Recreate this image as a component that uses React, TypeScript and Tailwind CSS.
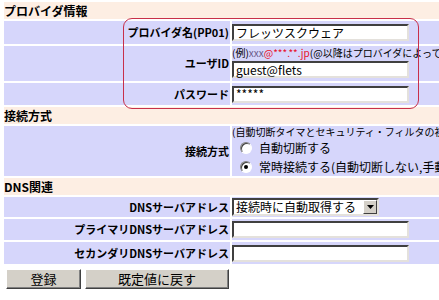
import React from "react";

const font = { fontFamily: '"Noto Sans CJK JP", "Noto Sans", sans-serif' };

const sunken =
  "border-2 border-t-[#404040] border-l-[#404040] border-b-[#e4e1dc] border-r-[#e4e1dc] bg-white";

function TextBox({ value = "", width = "w-[177px]" }: { value?: string; width?: string }) {
  return (
    <div className={`${sunken} ${width} h-[17px] flex items-center px-[2px] text-[12px] leading-none text-black`}>
      {value}
    </div>
  );
}

function Header({ title }: { title: string }) {
  return (
    <tr>
      <td colSpan={2} className="bg-[#fdeee3] h-[17px] p-0 text-[12px] font-bold leading-none text-black align-middle">
        {title}
      </td>
    </tr>
  );
}

function Label({ children }: { children: React.ReactNode }) {
  return (
    <td className="bg-[#d6d6fb] w-[226px] p-0 pr-[1px] text-right text-[11px] font-bold leading-none text-black align-middle whitespace-nowrap">
      {children}
    </td>
  );
}

function Radio({ checked }: { checked?: boolean }) {
  return (
    <span className="relative inline-flex w-[12px] h-[12px] rounded-full bg-white border border-t-[#808080] border-l-[#808080] border-b-[#ffffff] border-r-[#ffffff] shadow-[inset_1px_1px_0_#404040] items-center justify-center">
      {checked && <span className="w-[4px] h-[4px] rounded-full bg-black" />}
    </span>
  );
}

function Button({ label, width }: { label: string; width: string }) {
  return (
    <div
      className={`${width} h-[20px] bg-[#d4d0c8] border border-t-white border-l-white border-b-[#404040] border-r-[#404040] shadow-[inset_-1px_-1px_0_#808080] flex items-center justify-center text-[13px] text-black`}
    >
      {label}
    </div>
  );
}

export default function App() {
  return (
    <div className="relative w-[439px] h-[300px] overflow-hidden bg-white" style={font}>
      <table className="ml-[2px] border-separate border-spacing-[2px] w-[620px]">
        <tbody>
          <Header title="プロバイダ情報" />
          <tr className="h-[23px]">
            <Label>プロバイダ名(PP01)</Label>
            <td className="bg-[#d6d6fb] p-0 align-middle">
              <TextBox value="フレッツスクウェア" />
            </td>
          </tr>
          <tr className="h-[35px]">
            <Label>ユーザID</Label>
            <td className="bg-[#d6d6fb] p-0 align-top">
              <div className="h-[14px] flex items-center text-[10px] leading-none whitespace-nowrap text-black">
                (例)<span className="text-[#6a5a8a]">xxx</span>
                <span className="text-[#e8102a]">@***.**.jp</span>(@以降はプロバイダによって異なります)
              </div>
              <div className="mt-[1px]">
                <TextBox value="guest@flets" />
              </div>
            </td>
          </tr>
          <tr className="h-[22px]">
            <Label>パスワード</Label>
            <td className="bg-[#d6d6fb] p-0 align-middle">
              <TextBox value="*****" />
            </td>
          </tr>

          <Header title="接続方式" />
          <tr className="h-[50px]">
            <Label>接続方式</Label>
            <td className="bg-[#d6d6fb] p-0 align-top">
              <div className="h-[12px] flex items-center text-[10px] leading-none whitespace-nowrap text-black">
                (自動切断タイマとセキュリティ・フィルタの初期設定が変わります)
              </div>
              <div className="h-[19px] flex items-center gap-[7px] pl-[8px] text-[12px] whitespace-nowrap text-black">
                <Radio />
                自動切断する
              </div>
              <div className="h-[19px] flex items-center gap-[7px] pl-[8px] text-[12px] whitespace-nowrap text-black">
                <Radio checked />
                常時接続する(自動切断しない,手動切断のみ)
              </div>
            </td>
          </tr>

          <Header title="DNS関連" />
          <tr className="h-[20px]">
            <Label>DNSサーバアドレス</Label>
            <td className="bg-[#d6d6fb] p-0 align-middle">
              <div className={`${sunken} w-[147px] h-[18px] flex items-center justify-between pl-[2px] text-[12px] leading-none text-black`}>
                <span>接続時に自動取得する</span>
                <span className="w-[14px] h-[14px] bg-[#d4d0c8] border border-t-white border-l-white border-b-[#404040] border-r-[#404040] flex items-center justify-center">
                  <svg width="7" height="4" viewBox="0 0 7 4">
                    <path d="M0 0h7L3.5 4z" fill="#000" />
                  </svg>
                </span>
              </div>
            </td>
          </tr>
          <tr className="h-[21px]">
            <Label>プライマリDNSサーバアドレス</Label>
            <td className="bg-[#d6d6fb] p-0 align-middle">
              <TextBox />
            </td>
          </tr>
          <tr className="h-[22px]">
            <Label>セカンダリDNSサーバアドレス</Label>
            <td className="bg-[#d6d6fb] p-0 align-middle">
              <TextBox />
            </td>
          </tr>
        </tbody>
      </table>

      <div className="flex gap-[4px] ml-[6px] mt-[3px]">
        <Button label="登録" width="w-[75px]" />
        <Button label="既定値に戻す" width="w-[144px]" />
      </div>

      {/* highlight around provider fields */}
      <div className="absolute left-[123px] top-[18px] w-[296px] h-[91px] rounded-[9px] border border-[#c8304a] pointer-events-none" />
    </div>
  );
}
